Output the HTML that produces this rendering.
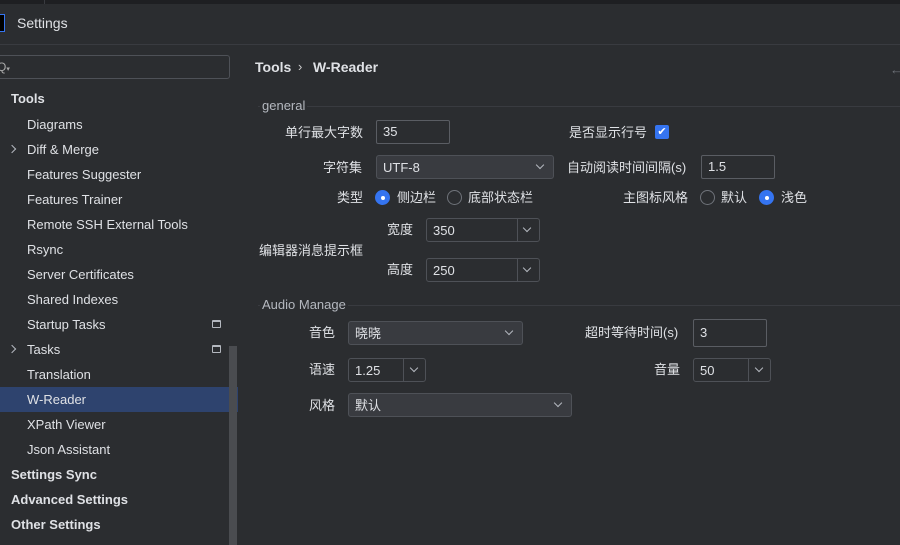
<!DOCTYPE html>
<html style="overflow:hidden;width:900px;height:545px"><head><meta charset="utf-8"><style>
*{box-sizing:border-box;margin:0;padding:0}
body{width:900px;height:545px;overflow:hidden;background:#2b2d30;font-family:"Liberation Sans","Noto Sans CJK SC",sans-serif;color:#dfe1e5;font-size:13px;position:relative}
.a{position:absolute;white-space:nowrap}
.side{font-size:13px;color:#dfe1e5}
.b{font-weight:bold}
.inp{position:absolute;background:#2b2d30;border:1px solid #5a5d63;border-radius:2px;padding-left:6px;line-height:22px;font-size:13px}
.cb{position:absolute;background:#393b40;border:1px solid #4e5157;border-radius:3px;padding-left:6px;line-height:23px;font-size:13px}
.cb.sp .div{position:absolute;top:0;bottom:0;border-left:1px solid #4e5157}
.cb.sp{background:#2b2d30}
.chev{position:absolute;width:6px;height:6px;border-right:1.2px solid #b4b8bf;border-bottom:1.2px solid #b4b8bf;transform:rotate(45deg)}
.rad{position:absolute;width:15px;height:15px;border-radius:50%;border:1px solid #6f737a}
.rad.on{background:#3574f0;border-color:#3574f0}
.rad.on::after{content:"";position:absolute;left:4.5px;top:4.5px;width:4px;height:4px;border-radius:50%;background:#fff}
.lbl{position:absolute;white-space:nowrap;font-size:13px;text-align:right;margin-top:-2px}
.grp{position:absolute;height:1px;background:#393b40}
</style></head><body>
<div class="a" style="left:0;top:0;width:900px;height:4px;background:#1e1f22"></div>
<div class="a" style="left:44px;top:0;width:1px;height:4px;background:#393b40"></div>
<div class="a" style="left:0;top:44px;width:900px;height:1px;background:#393b40"></div>
<div class="a" style="left:-4px;top:14px;width:9px;height:18px;background:#000;border:1px solid #3574f0"></div>
<div class="a" style="left:17px;top:15px;font-size:14px;color:#dfe1e5">Settings</div>

<div class="a" style="left:-4px;top:55px;width:234px;height:24px;border:1px solid #4e5157;border-radius:3px"></div>
<div class="a" style="left:-3px;top:60px;font-size:12px;color:#aaa">Q<span style="font-size:7px">▾</span></div>

<div class="a side b" style="left:11px;top:91px">Tools</div>
<div class="a side" style="left:27px;top:117px">Diagrams</div>
<div class="chev" style="left:9px;top:146px;transform:rotate(-45deg)"></div>
<div class="a side" style="left:27px;top:142px">Diff &amp; Merge</div>
<div class="a side" style="left:27px;top:167px">Features Suggester</div>
<div class="a side" style="left:27px;top:192px">Features Trainer</div>
<div class="a side" style="left:27px;top:217px">Remote SSH External Tools</div>
<div class="a side" style="left:27px;top:242px">Rsync</div>
<div class="a side" style="left:27px;top:267px">Server Certificates</div>
<div class="a side" style="left:27px;top:292px">Shared Indexes</div>
<div class="a side" style="left:27px;top:317px">Startup Tasks</div>
<div class="a" style="left:212px;top:320px;width:9px;height:8px;border:1px solid #b4b8bf;border-top-width:2px;border-radius:1px"></div>
<div class="chev" style="left:9px;top:346px;transform:rotate(-45deg)"></div>
<div class="a side" style="left:27px;top:342px">Tasks</div>
<div class="a" style="left:212px;top:345px;width:9px;height:8px;border:1px solid #b4b8bf;border-top-width:2px;border-radius:1px"></div>
<div class="a side" style="left:27px;top:367px">Translation</div>
<div class="a" style="left:0;top:387px;width:238px;height:25px;background:#2e436e"></div>
<div class="a side" style="left:27px;top:392px">W-Reader</div>
<div class="a side" style="left:27px;top:417px">XPath Viewer</div>
<div class="a side" style="left:27px;top:442px">Json Assistant</div>
<div class="a side b" style="left:11px;top:467px">Settings Sync</div>
<div class="a side b" style="left:11px;top:492px">Advanced Settings</div>
<div class="a side b" style="left:11px;top:517px">Other Settings</div>
<div class="a" style="left:229px;top:346px;width:8px;height:199px;background:#4a4c50"></div>

<div class="a b" style="left:255px;top:59px;font-size:14px">Tools</div>
<div class="a" style="left:298px;top:59px;font-size:13px;color:#ccc">›</div>
<div class="a b" style="left:313px;top:59px;font-size:14px">W-Reader</div>
<div class="a" style="left:890px;top:62px;color:#6f737a;font-size:13px">←</div>

<div class="grp" style="left:258px;top:106px;width:642px"></div>
<div class="a" style="left:260px;top:98px;background:#2b2d30;padding:0 2px;color:#b4b8bf">general</div>
<div class="lbl" style="left:285px;top:124px">单行最大字数</div>
<div class="inp" style="left:376px;top:120px;width:74px;height:24px">35</div>
<div class="lbl" style="left:569px;top:124px">是否显示行号</div>
<div class="a" style="left:655px;top:125px;width:14px;height:14px;background:#3574f0;border-radius:2px;color:#fff;font-size:11px;line-height:14px;text-align:center">✔</div>

<div class="lbl" style="left:323px;top:159px">字符集</div>
<div class="cb" style="left:376px;top:155px;width:178px;height:24px">UTF-8<div class="chev" style="right:10px;left:auto;top:6px"></div></div>
<div class="lbl" style="left:567px;top:159px">自动阅读时间间隔(s)</div>
<div class="inp" style="left:701px;top:155px;width:74px;height:24px">1.5</div>

<div class="lbl" style="left:337px;top:189px">类型</div>
<div class="rad on" style="left:375px;top:190px"></div>
<div class="lbl" style="left:397px;top:189px">侧边栏</div>
<div class="rad" style="left:447px;top:190px"></div>
<div class="lbl" style="left:468px;top:189px">底部状态栏</div>
<div class="lbl" style="left:623px;top:189px">主图标风格</div>
<div class="rad" style="left:700px;top:190px"></div>
<div class="lbl" style="left:721px;top:189px">默认</div>
<div class="rad on" style="left:759px;top:190px"></div>
<div class="lbl" style="left:781px;top:189px">浅色</div>

<div class="lbl" style="left:387px;top:221px">宽度</div>
<div class="cb sp" style="left:426px;top:218px;width:114px;height:24px">350<div class="div" style="left:90px"></div><div class="chev" style="right:9px;left:auto;top:6px"></div></div>
<div class="lbl" style="left:259px;top:242px">编辑器消息提示框</div>
<div class="lbl" style="left:387px;top:261px">高度</div>
<div class="cb sp" style="left:426px;top:258px;width:114px;height:24px">250<div class="div" style="left:90px"></div><div class="chev" style="right:9px;left:auto;top:6px"></div></div>

<div class="grp" style="left:258px;top:305px;width:642px"></div>
<div class="a" style="left:260px;top:297px;background:#2b2d30;padding:0 2px;color:#b4b8bf">Audio Manage</div>
<div class="lbl" style="left:309px;top:324px">音色</div>
<div class="cb" style="left:348px;top:321px;width:175px;height:24px">晓晓<div class="chev" style="right:10px;left:auto;top:6px"></div></div>
<div class="lbl" style="left:585px;top:324px">超时等待时间(s)</div>
<div class="inp" style="left:693px;top:319px;width:74px;height:28px;line-height:26px">3</div>

<div class="lbl" style="left:309px;top:361px">语速</div>
<div class="cb sp" style="left:348px;top:358px;width:78px;height:24px">1.25<div class="div" style="left:54px"></div><div class="chev" style="right:8px;left:auto;top:6px"></div></div>
<div class="lbl" style="left:654px;top:361px">音量</div>
<div class="cb sp" style="left:693px;top:358px;width:78px;height:24px">50<div class="div" style="left:54px"></div><div class="chev" style="right:8px;left:auto;top:6px"></div></div>

<div class="lbl" style="left:309px;top:397px">风格</div>
<div class="cb" style="left:348px;top:393px;width:224px;height:24px">默认<div class="chev" style="right:10px;left:auto;top:6px"></div></div>
</body></html>
